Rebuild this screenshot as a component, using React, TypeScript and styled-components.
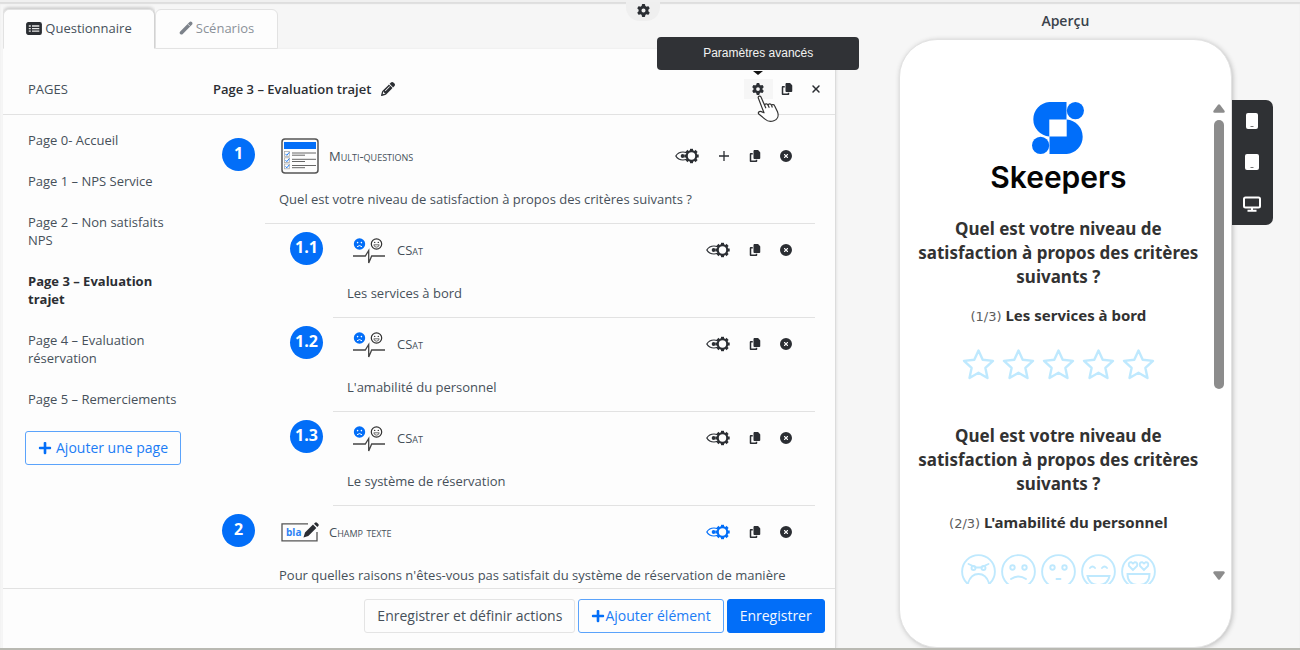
import React from "react";
import styled, { createGlobalStyle, css } from "styled-components";
import { FaGear, FaCopy, FaXmark, FaCircleXmark, FaPencil } from "react-icons/fa6";
import { FaPlus } from "react-icons/fa";

const blue = "#026ef8";
const ink = "#2b2e33";
const body = "#46505a";
const line = "#e2e2e2";

const GlobalStyle = createGlobalStyle`
  * { box-sizing: border-box; }
  body {
    margin: 0;
    background: #f6f6f6;
    color: ${body};
    font: 13px/18px "Open Sans", sans-serif;
  }
  h1, h2, h3, p, ul, ol { margin: 0; padding: 0; font-size: inherit; }
  ul, ol { list-style: none; }
  button { font: inherit; color: inherit; cursor: pointer; }
`;

const Shell = styled.div`
  position: relative;
  display: grid;
  grid-template-columns: minmax(0, 9fr) minmax(0, 5fr);
  height: 100vh;
  overflow: hidden;
  border-top: 2px solid #f0f0f0;
  border-bottom: 2px solid #b9b9b2;
  box-shadow: inset 0 2px 1px #dedede;
`;

const TopHandle = styled.div`
  position: absolute;
  inset: 0 14px auto 0;
  display: flex;
  justify-content: center;
`;

const HandleButton = styled.button`
  width: 34px;
  height: 19px;
  padding: 0 0 2px;
  border: 0;
  border-radius: 0 0 14px 14px;
  background: #efefef;
  color: ${ink};
  display: flex;
  align-items: center;
  justify-content: center;
`;

const Editor = styled.main`
  display: flex;
  flex-direction: column;
  min-height: 0;
  padding-left: 3px;
  padding-top: 7px;
`;

const Tabs = styled.nav`
  display: flex;
  height: 40px;
  flex: none;
`;

const Tab = styled.button<{ $active?: boolean }>`
  display: flex;
  align-items: center;
  justify-content: center;
  gap: 3px;
  width: ${(p) => (p.$active ? 152 : 123)}px;
  border: 1px solid ${line};
  border-radius: 6px 6px 0 0;
  background: #fdfdfd;
  padding: 0 0 2px;
  font-size: 13px;
  color: ${(p) => (p.$active ? body : "#8b9199")};
  ${(p) =>
    p.$active &&
    css`
      border-bottom-color: #fdfdfd;
      border-right-color: #d2d2d2;
      box-shadow: 0 -2px 3px #cfcfcf;
      clip-path: inset(-5px 0 0 0);
    `}
`;

const Panel = styled.section`
  flex: 1;
  min-height: 0;
  display: flex;
  flex-direction: column;
  background: #fdfdfd;
  border-right: 1px solid #dcdcdc;
  box-shadow: 1px 0 2px #e6e6e6;
`;

const PanelHeader = styled.header`
  display: flex;
  align-items: center;
  flex: none;
  height: 66px;
  padding: 14px 4px 0 0;
  border-bottom: 1px solid ${line};
`;

const HeaderLabel = styled.h2`
  width: 210px;
  padding-left: 25px;
  font-weight: 400;
`;

const PageTitle = styled.h1`
  display: flex;
  align-items: center;
  gap: 10px;
  color: ${ink};
  font-weight: 600;
`;

const HeaderActions = styled.div`
  display: flex;
  margin-left: auto;
`;

const IconButton = styled.button<{ $width?: number; $hover?: boolean; $accent?: boolean }>`
  position: relative;
  display: flex;
  align-items: center;
  justify-content: center;
  width: ${(p) => p.$width ?? 30}px;
  height: 20px;
  padding: 0;
  border: 0;
  background: ${(p) => (p.$hover ? "#f6f6f6" : "none")};
  color: ${(p) => (p.$accent ? blue : ink)};
`;

const Tooltip = styled.span`
  position: absolute;
  bottom: 29px;
  left: 50%;
  width: 202px;
  transform: translateX(-50%);
  padding: 8px 0;
  border-radius: 4px;
  background: #303236;
  color: #f2f2f2;
  font: 12px/17px "Liberation Sans", sans-serif;
  text-align: center;
  z-index: 2;

  &::after {
    content: "";
    position: absolute;
    top: 100%;
    left: 50%;
    margin: 1px 0 0 -5px;
    border: 5px solid transparent;
    border-top: 4px solid #111;
    border-bottom: 0;
  }
`;

const Pointer = styled.svg`
  position: absolute;
  top: 16px;
  left: 13px;
  z-index: 2;
`;

const Columns = styled.div`
  flex: 1;
  min-height: 0;
  display: flex;
`;

const Sidebar = styled.aside`
  width: 200px;
  flex: none;
  padding: 16px 20px 0 22px;
`;

const PageList = styled.ul`
  display: flex;
  flex-direction: column;
  gap: 23px;
  padding-left: 3px;
`;

const PageLink = styled.a<{ $current?: boolean }>`
  display: block;
  color: ${(p) => (p.$current ? ink : body)};
  font-weight: ${(p) => (p.$current ? 700 : 400)};
  text-decoration: none;
`;

const Button = styled.button<{ $kind: "plain" | "outline" | "primary"; $gap?: number }>`
  display: inline-flex;
  align-items: center;
  justify-content: center;
  gap: ${(p) => p.$gap ?? 0}px;
  height: 34px;
  padding: 0 12px;
  border: 1px solid ${(p) => (p.$kind === "plain" ? "#e4e4e4" : p.$kind === "outline" ? "#5ba3fb" : blue)};
  border-radius: 3px;
  background: ${(p) => (p.$kind === "primary" ? blue : "#fdfdfd")};
  color: ${(p) => (p.$kind === "plain" ? body : p.$kind === "outline" ? "#1b7cf5" : "#f4f8ff")};
  font-size: 14px;
  white-space: nowrap;

  svg { color: ${(p) => (p.$kind === "outline" ? blue : "inherit")}; }
`;

const AddPage = styled.div`
  margin-top: 23px;
`;

const Questions = styled.ol`
  flex: 1;
  min-width: 0;
  overflow: hidden;
  padding: 15px 20px 0 19px;
`;

const QuestionRow = styled.li<{ $nested?: boolean }>`
  display: flex;
  gap: 10px;
  margin-left: ${(p) => (p.$nested ? 68 : 0)}px;
`;

const Badge = styled.span`
  flex: none;
  width: 33px;
  height: 33px;
  margin-top: 8px;
  padding-bottom: 4px;
  border-radius: 50%;
  background: ${blue};
  color: #fff;
  font-size: 16px;
  font-weight: 700;
  display: flex;
  align-items: center;
  justify-content: center;
`;

const QuestionContent = styled.div`
  flex: 1;
  min-width: 0;
  padding: 8px 14px 15px;
  border-bottom: 1px solid ${line};
`;

const QuestionHead = styled.div`
  display: flex;
  align-items: center;
  height: 36px;
  margin-bottom: 16px;
`;

const KindIcon = styled.span`
  display: flex;
  width: 50px;
  padding-left: 2px;
`;

const KindLabel = styled.span`
  font-size: 13px;
  font-variant: small-caps;
`;

const RowActions = styled.div`
  display: flex;
  gap: 1px;
  margin-left: auto;
`;

const Footer = styled.footer`
  flex: none;
  display: flex;
  justify-content: flex-end;
  gap: 3px;
  height: 60px;
  padding: 10px 10px 0;
  border-top: 1px solid ${line};
`;

const Preview = styled.aside`
  display: flex;
  min-height: 0;
  padding: 0 27px 0 63px;
`;

const PreviewColumn = styled.div`
  flex: 1;
  min-width: 0;
  display: flex;
  flex-direction: column;
`;

const PreviewTitle = styled.h2`
  padding: 10px 0 9px;
  text-align: center;
  font-size: 14px;
  font-weight: 600;
  color: #3a424b;
`;

const Phone = styled.section`
  flex: 1;
  min-height: 0;
  display: flex;
  padding: 60px 6px 63px 2px;
  border: 1px solid #e2e2e2;
  border-radius: 38px;
  background: #fff;
  box-shadow: 1px 1px 5px #bdbdbd;
`;

const Screen = styled.div`
  flex: 1;
  min-width: 0;
  overflow: hidden;
  display: flex;
  flex-direction: column;
  align-items: center;
  padding: 2px 6px 0 8px;
  color: #323232;
`;

const Wordmark = styled.p`
  margin-top: 4px;
  margin-bottom: 20px;
  color: #050505;
  font: 600 30px/39px Inter, sans-serif;
`;

const Survey = styled.article`
  display: flex;
  flex-direction: column;
  align-items: center;
  flex: none;
  height: 207px;
  text-align: center;
`;

const SurveyTitle = styled.h3`
  font: 700 17px/24px "Noto Sans", sans-serif;
`;

const SurveyItem = styled.p`
  margin-top: 16px;
  font: 700 15px/20px "Noto Sans", sans-serif;

  small {
    font: 13px/20px "DejaVu Sans", sans-serif;
    color: #5c5c5c;
  }
`;

const Choices = styled.div`
  display: flex;
  gap: 5px;
  margin-top: 20px;
  color: #bfe9fe;
`;

const Choice = styled.button`
  display: flex;
  padding: 0;
  border: 0;
  background: none;
`;

const ScrollTrack = styled.div`
  flex: none;
  width: 12px;
  display: flex;
  flex-direction: column;
  align-items: center;
  padding: 4px 0;
  color: #8c8c8c;
`;

const ScrollThumb = styled.div`
  width: 10px;
  height: 269px;
  margin: 7px 0 auto;
  border-radius: 5px;
  background: #8c8c8c;
`;

const DeviceBar = styled.div`
  align-self: flex-start;
  display: flex;
  flex-direction: column;
  justify-content: space-around;
  width: 41px;
  height: 125px;
  margin-top: 98px;
  border-radius: 0 7px 7px 0;
  background: #2f3134;
`;

const DeviceButton = styled.button`
  display: flex;
  justify-content: center;
  padding: 8px 0;
  border: 0;
  background: none;
`;

const ListGlyph = () => (
  <svg width="16" height="13" viewBox="0 0 16 13">
    <rect x=".8" y=".8" width="14.4" height="11.4" rx="1.5" fill={ink} stroke={ink} strokeWidth="1.4" />
    <path d="M2.8 4h2M2.8 6.6h2M2.8 9.2h2M6 4h7.3M6 6.6h7.3M6 9.2h7.3" stroke="#e8e8e8" strokeWidth="1.3" />
  </svg>
);

const WandGlyph = () => (
  <svg width="14" height="14" viewBox="0 0 14 14" strokeLinecap="round">
    <path d="M2.5 11.7 11.6 2.4" stroke="#7d838b" strokeWidth="3.6" />
    <path d="M9.2 3.4 10.8 5" stroke="#fdfdfd" strokeWidth=".7" />
  </svg>
);

const teeth = [0, 45, 90, 135, 180, 225, 270, 315];

const EyeGear = () => (
  <svg width="24" height="16" viewBox="0 0 24 16" fill="none" stroke="currentColor">
    <path d="M11.5 4.7C10.2 4.2 9 4 8 4 4.8 4 2 6 .8 8 2 10 4.8 12 8 12c1 0 2.2-.2 3.5-.7" strokeWidth="1.2" />
    <circle cx="7.6" cy="8" r="1.9" fill="currentColor" stroke="none" />
    <circle cx="16.5" cy="8" r="4.8" strokeWidth="2.2" />
    {teeth.map((a) => (
      <path key={a} d="M16.500 3V.8" strokeWidth="3" transform={`rotate(${a} 16.5 8)`} />
    ))}
  </svg>
);

const FormGlyph = () => (
  <svg width="38" height="36" viewBox="0 0 38 36" fill="none">
    <rect x="1" y="1" width="36" height="34" rx="3" stroke="#555" strokeWidth="1.5" />
    <rect x="3" y="4" width="32" height="7" fill={blue} />
    {[13.5, 19.8, 26].map((y) => (
      <g key={y}>
        <rect x="3.5" y={y} width="4.8" height="4.8" stroke="#aaa" strokeWidth=".8" />
        <path d={`M4.5 ${y + 2.4}l1.3 1.4 2.5-3`} stroke={blue} strokeWidth=".9" />
        <path d={`M11 ${y + 1.5}H35`} stroke="#666" strokeWidth="1" />
        <path d={`M11 ${y + 3.7}H24`} stroke="#666" strokeWidth="1" />
      </g>
    ))}
  </svg>
);

const CsatGlyph = () => (
  <svg width="38" height="30" viewBox="-2 -2 38 30" fill="none">
    <circle cx="8.5" cy="7" r="5.7" fill={blue} />
    <circle cx="6.6" cy="5.6" r=".8" fill="#fff" />
    <circle cx="10.4" cy="5.6" r=".8" fill="#fff" />
    <path d="M6 9.8q2.5-2.4 5 0" stroke="#fff" />
    <circle cx="25.5" cy="7" r="5.2" stroke="#333" strokeWidth="1.2" />
    <circle cx="23.7" cy="5.4" r=".7" fill="#333" />
    <circle cx="27.3" cy="5.4" r=".7" fill="#333" />
    <path d="M22.8 7.8h5.4q-.5 2.400-2.700 2.400T22.800 7.800z" stroke="#333" strokeWidth=".7" />
    <path d="M2 19h12.3l3.4-5.5V26l3-7H34" stroke="#444" strokeWidth="1.3" />
  </svg>
);

const TextGlyph = () => (
  <svg width="38" height="20" viewBox="0 0 38 20">
    <path d="M27 1.8H1v17h35V10" fill="none" stroke="#555" strokeWidth="1.3" />
    <text x="5" y="14" fontFamily="Open Sans, sans-serif" fontWeight="700" fontSize="10" fill="#2c83f5">bla</text>
    <path d="M22.5 15.5l1.500-5L32 2.600l3.300 3.300-8 8zM33 1.700l1-1q1-.9 2 0l1.300 1.300q.9 1 0 2l-1 1z" fill={ink} />
  </svg>
);

const Star = () => (
  <svg width="35" height="35" viewBox="0 0 35 35" fill="none" stroke="currentColor" strokeWidth="2.4" strokeLinejoin="round">
    <path d="M17.5 3.5l4.200 9.300 10.300 1.100-7.600 7 2.100 10.100-9-5.200-9 5.200 2.100-10.100-7.600-7 10.300-1.100z" />
  </svg>
);

const faces: React.ReactNode[] = [
  <><path d="M7.5 10l8 3.500h4l8-3.500" /><circle cx="12.5" cy="14" r="2" /><circle cx="22.5" cy="14" r="2" /><path d="M7 29q3-9 10.500-9T28 29" /></>,
  <><circle cx="11.5" cy="13.5" r="2.2" /><circle cx="23.5" cy="13.5" r="2.2" /><path d="M10 25q7.500-5 15 0" /></>,
  <><circle cx="11.5" cy="13.5" r="2.2" /><circle cx="23.5" cy="13.5" r="2.2" /><path d="M15.500 25h4" /></>,
  <><path d="M9 14q2.500-3 5 0M21 14q2.500-3 5 0M6.500 22h22q-2 9-11 9t-11-9z" /></>,
  <><path d="M12 16l-4-4q-1-4 2.500-3.700L12 9.500l1.500-1.200Q17 8 16 12zM23 16l-4-4q-1-4 2.500-3.700L23 9.500l1.500-1.200Q28 8 27 12zM6.500 20h22q0 11-11 11t-11-11z" /></>,
];

const Face = ({ children }: { children: React.ReactNode }) => (
  <svg width="35" height="35" viewBox="0 0 35 35" fill="none" stroke="currentColor" strokeWidth="1.9" strokeLinecap="round">
    <circle cx="17.5" cy="17.5" r="16.4" />
    {children}
  </svg>
);

const LogoMark = styled.svg`
  flex: none;
`;

const Logo = () => (
  <LogoMark width="52" height="52" viewBox="0 0 52 52" fill="#006efa">
    <path d="M34.5 0H17.300a17.300 17.300 0 0 0 0 34.500V17.500h17.200zM17.500 52h17.200a17.300 17.300 0 0 0 0-34.500v17H17.500z" />
    <circle cx="43.4" cy="8.6" r="8.6" />
    <circle cx="8.6" cy="43.4" r="8.6" />
  </LogoMark>
);

const pages = [
  "Page 0- Accueil",
  "Page 1 – NPS Service",
  "Page 2 – Non satisfaits NPS",
  "Page 3 – Evaluation trajet",
  "Page 4 – Evaluation réservation",
  "Page 5 – Remerciements",
];

interface Question {
  id: string;
  kind: string;
  icon: React.ReactNode;
  text: string;
  nested?: boolean;
  extendable?: boolean;
  accent?: boolean;
}

const questions: Question[] = [
  { id: "1", kind: "Multi-questions", icon: <FormGlyph />, text: "Quel est votre niveau de satisfaction à propos des critères suivants ?", extendable: true },
  { id: "1.1", kind: "CSat", icon: <CsatGlyph />, text: "Les services à bord", nested: true },
  { id: "1.2", kind: "CSat", icon: <CsatGlyph />, text: "L'amabilité du personnel", nested: true },
  { id: "1.3", kind: "CSat", icon: <CsatGlyph />, text: "Le système de réservation", nested: true },
  { id: "2", kind: "Champ texte", icon: <TextGlyph />, text: "Pour quelles raisons n'êtes-vous pas satisfait du système de réservation de manière globale ?", accent: true },
];

const QuestionItem = ({ q }: { q: Question }) => (
  <QuestionRow $nested={q.nested}>
    <Badge>{q.id}</Badge>
    <QuestionContent>
      <QuestionHead>
        <KindIcon>{q.icon}</KindIcon>
        <KindLabel>{q.kind}</KindLabel>
        <RowActions>
          <IconButton $width={42} $accent={q.accent} aria-label="Conditions d'affichage"><EyeGear /></IconButton>
          {q.extendable && (
            <IconButton aria-label="Ajouter">
              <svg width="10" height="10" viewBox="0 0 10 10" stroke="currentColor" strokeWidth="1.3"><path d="M5 0v10M0 5h10" /></svg>
            </IconButton>
          )}
          <IconButton aria-label="Dupliquer"><FaCopy size={12} /></IconButton>
          <IconButton aria-label="Supprimer"><FaCircleXmark size={12} /></IconButton>
        </RowActions>
      </QuestionHead>
      <p>{q.text}</p>
    </QuestionContent>
  </QuestionRow>
);

const SurveyBlock = ({ step, item, children }: { step: string; item: string; children: React.ReactNode }) => (
  <Survey>
    <SurveyTitle>Quel est votre niveau de satisfaction à propos des critères suivants ?</SurveyTitle>
    <SurveyItem><small>({step})</small> {item}</SurveyItem>
    <Choices>{children}</Choices>
  </Survey>
);

export default function App() {
  return (
    <>
      <GlobalStyle />
      <Shell>
        <Editor>
          <Tabs>
            <Tab $active><ListGlyph />Questionnaire</Tab>
            <Tab><WandGlyph />Scénarios</Tab>
          </Tabs>
          <Panel>
            <PanelHeader>
              <HeaderLabel>PAGES</HeaderLabel>
              <PageTitle>Page 3 – Evaluation trajet <FaPencil size={14} /></PageTitle>
              <HeaderActions>
                <IconButton $width={29} $hover aria-label="Paramètres avancés">
                  <FaGear size={12} />
                  <Tooltip>Paramètres avancés</Tooltip>
                  <Pointer width="24" height="28" viewBox="0 0 24 28" fill="#fff" stroke="#333" strokeWidth="1.2" strokeLinejoin="round">
                    <path d="M1.200 2.800C1 1 3.200.4 4 2l3.600 8.300c.2-1.700 2.700-2 3.400-.3.600-1.600 2.900-1.500 3.400.2.800-1.100 2.800-.8 3.300.7l2.900 6.200c1.400 4-.3 7.400-3.800 8.700-4 1.500-6.500.4-8.800-1.700l-5.900-4.800c-1.800-1.700.2-3.600 2.200-2.700l2.700 1.200z" />
                    <path d="M7.600 10.300l1.300 3M11 10l1.300 2.800M14.400 10.200l1 2.300" fill="none" />
                  </Pointer>
                </IconButton>
                <IconButton $width={29} aria-label="Dupliquer la page"><FaCopy size={12} /></IconButton>
                <IconButton $width={29} aria-label="Supprimer la page"><FaXmark size={12} /></IconButton>
              </HeaderActions>
            </PanelHeader>
            <Columns>
              <Sidebar>
                <PageList>
                  {pages.map((p, i) => (
                    <li key={p}><PageLink href="#" $current={i === 3}>{p}</PageLink></li>
                  ))}
                </PageList>
                <AddPage>
                  <Button $kind="outline" $gap={4}><FaPlus size={14} />Ajouter une page</Button>
                </AddPage>
              </Sidebar>
              <Questions>
                {questions.map((q) => <QuestionItem key={q.id} q={q} />)}
              </Questions>
            </Columns>
            <Footer>
              <Button $kind="plain">Enregistrer et définir actions</Button>
              <Button $kind="outline"><FaPlus size={14} />Ajouter élément</Button>
              <Button $kind="primary">Enregistrer</Button>
            </Footer>
          </Panel>
        </Editor>
        <Preview>
          <PreviewColumn>
            <PreviewTitle>Aperçu</PreviewTitle>
            <Phone>
              <Screen>
                <Logo />
                <Wordmark>Skeepers</Wordmark>
                <SurveyBlock step="1/3" item="Les services à bord">
                  {[1, 2, 3, 4, 5].map((n) => <Choice key={n} aria-label={`${n} sur 5`}><Star /></Choice>)}
                </SurveyBlock>
                <SurveyBlock step="2/3" item="L'amabilité du personnel">
                  {faces.map((f, i) => <Choice key={i} aria-label={`${i + 1} sur 5`}><Face>{f}</Face></Choice>)}
                </SurveyBlock>
              </Screen>
              <ScrollTrack>
                <svg width="12" height="9" viewBox="0 0 12 9" fill="currentColor"><path d="M5 .8q1-1 2 0l4.500 6q.8 1.700-1 2h-9q-1.800-.3-1-2z" /></svg>
                <ScrollThumb />
                <svg width="12" height="9" viewBox="0 0 12 9" fill="currentColor"><path d="M5 8.200q1 1 2 0l4.500-6q.8-1.700-1-2h-9q-1.800.3-1 2z" /></svg>
              </ScrollTrack>
            </Phone>
          </PreviewColumn>
          <DeviceBar>
            <DeviceButton aria-label="Mobile">
              <svg width="12" height="16" viewBox="0 0 12 16"><rect width="12" height="16" rx="2" fill="#fff" /><path d="M4.500 13.500h3" stroke="#777" /></svg>
            </DeviceButton>
            <DeviceButton aria-label="Tablette">
              <svg width="14" height="16" viewBox="0 0 14 16"><rect width="14" height="16" rx="2" fill="#fff" /><path d="M5.500 13.500h3" stroke="#777" /></svg>
            </DeviceButton>
            <DeviceButton aria-label="Ordinateur">
              <svg width="18" height="16" viewBox="0 0 18 16" fill="none" stroke="#fff" strokeWidth="2"><rect x="1" y="1.500" width="16" height="10" rx="1.500" /><path d="M9 12v2.500M4.500 14.800h9" /></svg>
            </DeviceButton>
          </DeviceBar>
        </Preview>
        <TopHandle>
          <HandleButton aria-label="Paramètres"><FaGear size={13} /></HandleButton>
        </TopHandle>
      </Shell>
    </>
  );
}
